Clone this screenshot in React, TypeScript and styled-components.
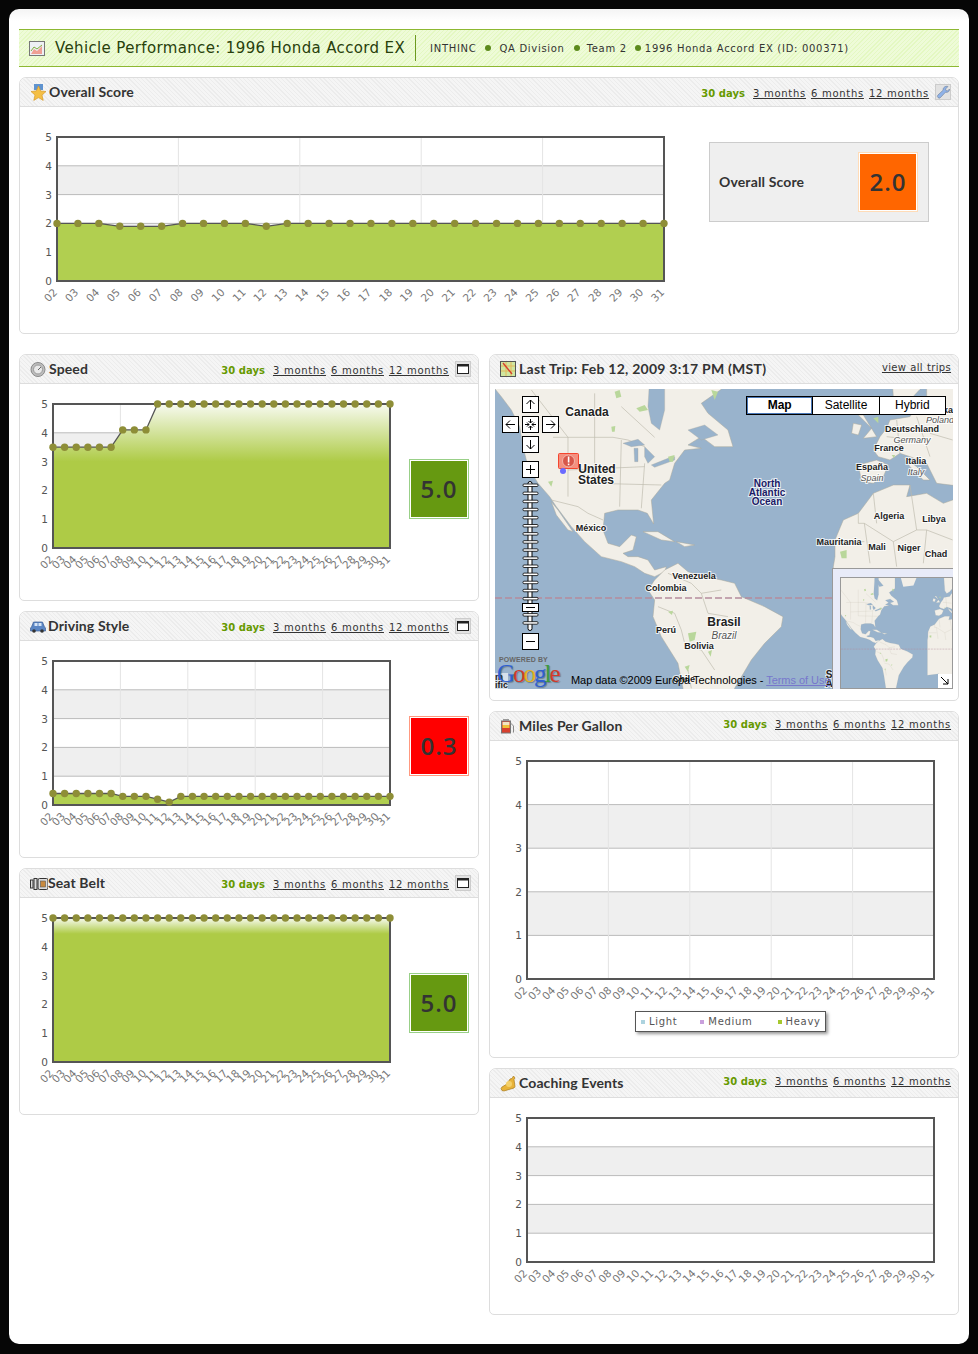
import React from 'react';
import styled, { createGlobalStyle } from 'styled-components';

const GlobalStyle = createGlobalStyle`
  html, body {
    margin: 0;
    padding: 0;
    background: #060606;
  }
  * {
    box-sizing: border-box;
  }
`;

const verdana = '"DejaVu Sans", Verdana, sans-serif';
const heading = 'Lato, "Open Sans", sans-serif';
const arial = '"Liberation Sans", Arial, sans-serif';

const Page = styled.div`
  width: 960px;
  height: 1335px;
  margin: 9px 0 0 9px;
  padding: 20px 10px 0;
  background: linear-gradient(#f4f4f4, #fff 12px);
  border-radius: 10px;
`;

const TitleBar = styled.div`
  display: flex;
  align-items: center;
  height: 38px;
  padding-left: 10px;
  border-top: 1px solid #8db832;
  border-bottom: 1px solid #8db832;
  background: repeating-linear-gradient(135deg, #e4f8c2 0 1px, #eefbd8 1px 3px);
`;

const TitleText = styled.h1`
  margin: 0 10px;
  font: 400 15px ${verdana};
  letter-spacing: 0.36px;
  color: #28400c;
  white-space: nowrap;
`;

const Crumbs = styled.div`
  display: flex;
  align-items: center;
  height: 26px;
  border-left: 1px solid #6c9a1f;
  padding-left: 14px;
  font: 400 10px ${verdana};
  letter-spacing: 0.7px;
  color: #333;
  white-space: nowrap;
`;

const Dot = styled.span<{ $l: number; $r: number }>`
  width: 6px;
  height: 6px;
  margin: 0 ${p => p.$r}px 0 ${p => p.$l}px;
  border-radius: 50%;
  background: #5c8a1c;
`;

const Panel = styled.section`
  border: 1px solid #ddd;
  border-radius: 7px 7px 5px 5px;
  background: #fff;
`;

const PanelHead = styled.header`
  display: flex;
  align-items: center;
  height: 29px;
  padding: 0 7px 0 10px;
  border-bottom: 1px solid #ddd;
  border-radius: 6px 6px 0 0;
  background: repeating-linear-gradient(45deg, #ececec 0 1px, #f5f5f5 1px 3px);
`;

const PanelTitle = styled.h2<{ $m?: number; $spread?: number }>`
  flex: 1;
  margin: 0 0 2px ${p => p.$m ?? 3}px;
  font: 700 14px ${heading};
  letter-spacing: ${p => p.$spread ?? 0.12}px;
  color: #333;
  white-space: nowrap;
`;

const Ranges = styled.nav<{ $lift?: boolean }>`
  display: flex;
  align-items: center;
  margin-bottom: ${p => (p.$lift ? 5 : 0)}px;
  font: 400 10px ${verdana};
  letter-spacing: 0.72px;
  color: #333;
  white-space: nowrap;
`;

const Current = styled.b`
  margin: 2px 8px 0 0;
  color: #669900;
  letter-spacing: 0.05px;
`;

const RangeLink = styled.a`
  margin-top: 2px;
  color: #333;
  text-decoration: underline;

  & + & {
    margin-left: 5px;
  }
`;

const TripLink = styled(RangeLink)`
  letter-spacing: 0.33px;
  word-spacing: 0.5px;
`;

const ToolButton = styled.span`
  display: flex;
  align-items: center;
  justify-content: center;
  width: 16px;
  height: 16px;
  margin-left: 6px;
  background: #e2e2e2;
  border: 1px solid #ccc;
`;

const Body = styled.div`
  display: flex;
  align-items: flex-start;
  padding: 12px 0 28px 3px;
`;

const CoachBody = styled(Body)`
  padding-left: 7px;
`;

const WideBody = styled(Body)`
  padding: 22px 0 28px 7px;
`;

const ChartColumn = styled.div`
  padding: 12px 0 25px 7px;
`;

const ChartSvg = styled.svg`
  display: block;
  flex: none;
`;

const ScoreBadge = styled.div<{ $bg: string; $edge: string }>`
  display: flex;
  align-items: center;
  justify-content: center;
  flex: none;
  width: 60px;
  height: 60px;
  padding-bottom: 2px;
  border: 1px solid ${p => p.$edge};
  box-shadow: inset 0 0 0 1px #fff;
  background: ${p => p.$bg};
  font: 600 24px "Open Sans", sans-serif;
  letter-spacing: 1px;
  color: #333;
`;

const SideScore = styled(ScoreBadge)`
  margin: 63px 0 0 9px;
`;

const OverallBox = styled.div`
  display: flex;
  align-items: center;
  justify-content: space-between;
  width: 220px;
  height: 80px;
  margin: 13px 0 0 35px;
  padding: 0 10px 0 9px;
  border: 1px solid #ccc;
  background: #efefef;
  font: 700 14px ${heading};
  letter-spacing: 0.14px;
  color: #333;
`;

const OverallLabel = styled.span`
  margin-bottom: 2px;
`;

const Columns = styled.div`
  display: grid;
  grid-template-columns: 460px 470px;
  gap: 10px;
  margin-top: 20px;
`;

const Stack = styled.div`
  display: flex;
  flex-direction: column;
  gap: 10px;
`;

const OverallPanel = styled(Panel)`
  margin-top: 10px;
`;

const Legend = styled.div`
  display: flex;
  width: 191px;
  height: 21px;
  margin: 8px 0 0 138px;
  padding-left: 5px;
  align-items: center;
  border: 1px solid #555;
  background: #fff;
  box-shadow: 2px 2px 3px #999;
  font: 400 10px ${verdana};
  letter-spacing: 0.7px;
  color: #555;
`;

const LegendItem = styled.span<{ $w: number }>`
  display: flex;
  align-items: center;
  width: ${p => p.$w}px;
`;

const Swatch = styled.i<{ $c: string }>`
  width: 4px;
  height: 4px;
  margin-right: 4px;
  background: ${p => p.$c};
`;

const MapBody = styled.div`
  padding: 5px 5px 11px;
`;

const MapFrame = styled.div`
  position: relative;
  width: 458px;
  height: 300px;
  overflow: hidden;
  background: #99b3cc;
`;

const LabelLayer = styled.svg`
  position: absolute;
  left: 0;
  top: 0;
`;

const NavButton = styled.span<{ $x: number; $y: number }>`
  position: absolute;
  left: ${p => p.$x}px;
  top: ${p => p.$y}px;
  display: flex;
  align-items: center;
  justify-content: center;
  width: 17px;
  height: 17px;
  border: 1px solid #000;
  background: #fff;
`;

const Slider = styled.svg`
  position: absolute;
  left: 27px;
  top: 92px;
`;

const MapTypes = styled.div`
  position: absolute;
  left: 251px;
  top: 7px;
  display: flex;
  width: 200px;
  height: 19px;
  border: 1px solid #000;
  background: #000;
  gap: 1px;
`;

const MapType = styled.span<{ $on?: boolean }>`
  flex: 1;
  text-align: center;
  background: #fff;
  font: ${p => (p.$on ? 700 : 400)} 12px/17px ${arial};
  color: #000;
  box-shadow: ${p => (p.$on ? 'inset 0 0 0 1px #4a78b8' : 'none')};
`;

const Overview = styled.div`
  position: absolute;
  right: 0;
  bottom: 0;
  width: 121px;
  height: 121px;
  padding: 8px 0 0 7px;
  border: 1px solid #999;
  border-width: 1px 0 0 1px;
  background: #e8ebf8;
`;

const OverviewMap = styled.div`
  position: relative;
  width: 113px;
  height: 112px;
  border: 1px solid #999;
  background: #99b3cc;
  overflow: hidden;
`;

const OverviewToggle = styled.span`
  position: absolute;
  right: 0;
  bottom: 0;
  display: flex;
  align-items: center;
  justify-content: center;
  width: 14px;
  height: 14px;
  background: #fff;
`;

const Powered = styled.div`
  position: absolute;
  left: 4px;
  top: 267px;
  font: 700 7px ${arial};
  letter-spacing: 0.1px;
  color: #666;
`;

const GoogleMark = styled.div`
  position: absolute;
  left: 2px;
  top: 271px;
  font: 400 25px/28px "Liberation Serif", serif;
  letter-spacing: -2px;
  text-shadow: 1px 1px 1px rgba(0, 0, 0, 0.3);
  white-space: nowrap;
`;

const Letter = styled.span<{ $c: string }>`
  color: ${p => p.$c};
`;

const Attribution = styled.div`
  position: absolute;
  left: 76px;
  top: 285px;
  font: 400 11px/13px ${arial};
  letter-spacing: -0.04px;
  color: #000;
  white-space: nowrap;
`;

const TermsLink = styled.a`
  color: #7777cc;
  text-decoration: underline;
`;

const CutLabel = styled.div`
  position: absolute;
  left: 0;
  top: 284px;
  font: 700 9px/8px ${arial};
  color: #222;
  background: rgba(255, 255, 255, 0.6);
`;

// coastlines, traced in the 3x crop coordinates of the west half
const WEST_LAND: string[] = [
  '0,0 22,118 40,140 70,180 95,230 105,290 120,350 150,400 185,440 205,470 250,530 290,575 340,620 400,635 440,650 470,670 500,680 530,665 535,650 500,660 480,630 450,620 420,620 405,610 435,600 445,560 430,555 395,590 360,580 345,540 350,490 390,480 450,480 478,490 497,522 490,450 530,400 545,390 560,340 590,300 640,295 600,285 640,260 680,290 735,290 720,240 660,190 640,160 700,118 700,0',
  '530,660 570,640 600,665 650,680 700,690 740,700 760,740 830,770 885,800 880,830 830,880 790,930 740,1015 700,1200 640,1300 610,1180 585,1015 570,940 520,860 495,800 500,750 480,720 500,690',
  '465,545 510,545 560,575 520,570',
  '565,575 620,585 590,590',
  '190,455 210,480 255,545 240,540 205,495',
];

const WEST_WATER: string[] = [
  '490,0 530,0 530,180 515,240 490,220 480,170',
  '405,280 450,268 470,285 430,290',
  '438,295 450,295 450,335 440,335',
  '470,290 500,320 480,340 470,320',
  '490,345 540,325 560,320 560,330 500,352',
  '600,240 650,225 690,255 640,270',
  '500,40 530,30 580,90 540,100',
];

const WEST_GREEN: string[] = [
  '445,175 470,165 480,180 455,185',
  '380,125 395,120 400,140 385,145',
  '370,230 382,228 380,245 372,245',
  '540,320 560,315 555,335 545,335',
  '180,395 195,392 190,410',
  '660,905 672,900 668,920',
  '600,850 625,845 620,870 605,875',
  '540,785 555,782 552,795',
  '670,120 690,125 680,150',
  '590,950 605,945 600,965',
];

const WEST_LINES: string[] = [
  '195,262 375,262 420,270 470,290',
  '190,450 270,470 300,490 345,510',
  '320,262 320,400',
  '240,262 240,440',
  '400,270 395,470',
  '470,340 460,475',
  '240,360 470,350',
  '320,400 520,405',
  '540,670 610,700 640,730 700,720',
  '510,770 560,790 580,840 590,880',
  '590,890 640,900 680,960',
  '600,960 610,1015',
  '640,730 660,790 720,800',
  '130,120 240,262',
  '320,130 320,262',
  '400,170 500,262',
];

// same idea for the east half crop
const EAST_LAND: string[] = [
  '310,1015 310,650 315,620 315,570 340,510 385,490 430,430 490,405 540,405 530,440 590,430 640,460 668,450 700,450 700,1500 520,1200 430,1000',
  '385,345 440,330 475,345 460,380 430,400 395,395',
  '430,300 450,260 470,235 480,210 540,200 560,170 600,190 668,130 700,130 700,410 620,400 590,340 540,320 510,310 480,330 445,320',
  '520,320 560,350 600,390 580,390 540,350',
  '385,195 400,195 440,260 400,265 425,235',
  '370,220 395,225 385,255 365,250',
  '480,0 570,0 570,118 540,150 510,170 490,140',
  '590,0 700,0 700,190 620,180 590,150',
];

const EAST_GREEN: string[] = [
  '430,205 445,200 445,220',
  '330,605 350,600 350,625 335,625',
  '485,315 495,315 492,325',
];

const EAST_LINES: string[] = [
  '385,490 385,520 403,520 490,575 560,540 590,540 668,570',
  '403,520 420,640',
  '490,575 500,650',
  '590,540 580,640',
  '315,575 403,575',
  '430,430 440,520',
  '540,405 560,540',
  '500,210 510,310',
  '560,200 600,320',
  '470,260 560,270',
  '600,250 668,270',
];

const PLACES: { x: number; y: number; t: string; s: number; i?: boolean; navy?: boolean }[] = [
  { x: 92, y: 27, t: 'Canada', s: 12 },
  { x: 102, y: 84, t: 'United', s: 12 },
  { x: 101, y: 95, t: 'States', s: 12 },
  { x: 272, y: 98, t: 'North', s: 10, navy: true },
  { x: 272, y: 107, t: 'Atlantic', s: 10, navy: true },
  { x: 272, y: 116, t: 'Ocean', s: 10, navy: true },
  { x: 96, y: 142, t: 'México', s: 9 },
  { x: 199, y: 190, t: 'Venezuela', s: 9 },
  { x: 171, y: 202, t: 'Colombia', s: 9 },
  { x: 229, y: 237, t: 'Brasil', s: 12 },
  { x: 229, y: 250, t: 'Brazil', s: 10, i: true },
  { x: 171, y: 244, t: 'Perú', s: 9 },
  { x: 204, y: 260, t: 'Bolivia', s: 9 },
  { x: 189, y: 293, t: 'Chile', s: 9 },
  { x: 417, y: 43, t: 'Deutschland', s: 9 },
  { x: 417, y: 54, t: 'Germany', s: 9, i: true },
  { x: 445, y: 34, t: 'Poland', s: 9, i: true },
  { x: 453, y: 24, t: 'ka', s: 9 },
  { x: 394, y: 62, t: 'France', s: 9 },
  { x: 377, y: 81, t: 'España', s: 9 },
  { x: 377, y: 92, t: 'Spain', s: 9, i: true },
  { x: 421, y: 75, t: 'Italia', s: 9 },
  { x: 421, y: 86, t: 'Italy', s: 9, i: true },
  { x: 394, y: 130, t: 'Algeria', s: 9 },
  { x: 439, y: 133, t: 'Libya', s: 9 },
  { x: 344, y: 156, t: 'Mauritania', s: 9 },
  { x: 382, y: 161, t: 'Mali', s: 9 },
  { x: 414, y: 162, t: 'Niger', s: 9 },
  { x: 441, y: 168, t: 'Chad', s: 9 },
  { x: 334, y: 289, t: 'S', s: 10 },
  { x: 334, y: 298, t: 'A', s: 10 },
];

// base map, shared by the main map and the overview
const MapArt: React.FC<{ width: number; height: number; view: string }> = ({ width, height, view }) => (
  <ChartSvg width={width} height={height} viewBox={view} preserveAspectRatio="none">
    <rect x="-400" y="-400" width="1400" height="1400" fill="#99b3cc" />
    <polygon points="240,-60 310,-60 290,-10 255,-6" fill="#f2efe8" />
    <polygon points="40,-60 200,-60 200,0 40,0" fill="#f2efe8" />
    <g transform="translate(-7 -39) scale(0.3333)">
      {WEST_LAND.map(p => (
        <polygon key={p} points={p} fill="#f2efe8" stroke="#a9a79a" strokeWidth="1.5" />
      ))}
      {WEST_LINES.map(p => (
        <polyline key={p} points={p} fill="none" stroke="#bdb9ac" strokeWidth="2" />
      ))}
      {WEST_WATER.map(p => (
        <polygon key={p} points={p} fill="#99b3cc" stroke="#a9a79a" strokeWidth="1" />
      ))}
      {WEST_GREEN.map(p => (
        <polygon key={p} points={p} fill="#b9d79b" />
      ))}
    </g>
    <g transform="translate(235 -39) scale(0.3333)">
      {EAST_LAND.map(p => (
        <polygon key={p} points={p} fill="#f2efe8" stroke="#a9a79a" strokeWidth="1.5" />
      ))}
      {EAST_LINES.map(p => (
        <polyline key={p} points={p} fill="none" stroke="#bdb9ac" strokeWidth="2" />
      ))}
      {EAST_GREEN.map(p => (
        <polygon key={p} points={p} fill="#b9d79b" />
      ))}
    </g>
    <line x1="-400" x2="1000" y1="209" y2="209" stroke="#b58c9c" strokeWidth="1.5" strokeDasharray="7 3" />
  </ChartSvg>
);

const Arrow: React.FC<{ d: string }> = ({ d }) => (
  <svg width="13" height="13" viewBox="0 0 13 13">
    <path d={d} fill="none" stroke="#000" strokeWidth="1" />
  </svg>
);

const MapPanelBody = () => (
  <MapBody>
    <MapFrame>
      <MapArt width={458} height={300} view="0 0 458 300" />
      <LabelLayer width={458} height={300}>
        {PLACES.map(p => (
          <text
            key={p.t}
            x={p.x}
            y={p.y}
            textAnchor="middle"
            fontFamily={arial}
            fontSize={p.s}
            fontWeight={p.i ? 400 : 700}
            fontStyle={p.i ? 'italic' : 'normal'}
            fill={p.navy ? '#1b1b66' : p.i ? '#555' : '#222'}
            stroke="#fff"
            strokeWidth="2"
            strokeOpacity="0.75"
            paintOrder="stroke"
          >
            {p.t}
          </text>
        ))}
        <rect x="63.5" y="64.5" width="20" height="15" rx="1" fill="#f4907f" stroke="#f5452e" />
        <circle cx="73.5" cy="72" r="6" fill="#d8574a" stroke="#f4b5aa" />
        <rect x="72.8" y="67.5" width="1.6" height="6" fill="#fff" />
        <rect x="72.8" y="74.6" width="1.6" height="1.6" fill="#fff" />
        <circle cx="68" cy="82" r="3" fill="#6a6aff" />
      </LabelLayer>

      <NavButton $x={27} $y={7}><Arrow d="M6.5 11V2M2.5 6l4-4 4 4" /></NavButton>
      <NavButton $x={7} $y={27}><Arrow d="M11 6.5H2M6 2.5l-4 4 4 4" /></NavButton>
      <NavButton $x={27} $y={27}>
        <Arrow d="M6.5 1v4M4.5 3l2 2 2-2M6.5 12V8M4.5 10l2-2 2 2M1 6.5h4M3 4.5l2 2-2 2M12 6.5H8M10 4.5l-2 2 2 2" />
      </NavButton>
      <NavButton $x={47} $y={27}><Arrow d="M2 6.5h9M7 2.5l4 4-4 4" /></NavButton>
      <NavButton $x={27} $y={47}><Arrow d="M6.5 2v9M2.5 7l4 4 4-4" /></NavButton>
      <NavButton $x={27} $y={72}><Arrow d="M6.5 2v9M2 6.5h9" /></NavButton>
      <Slider width="17" height="150" viewBox="0 0 17 150">
        <rect x="6" y="0.5" width="4" height="149" rx="2" fill="#fff" stroke="#000" />
        {Array.from({ length: 18 }, (_, i) => (
          <rect key={i} x="1" y={3 + i * 8.1} width="15" height="2.5" rx="1" fill="#fff" stroke="#000" strokeWidth="0.8" />
        ))}
        <rect x="0.5" y="122.5" width="16" height="8" fill="#fff" stroke="#000" />
        <line x1="4" x2="13" y1="126.5" y2="126.5" stroke="#000" />
      </Slider>
      <NavButton $x={27} $y={244}><Arrow d="M2 6.5h9" /></NavButton>

      <MapTypes>
        <MapType $on>Map</MapType>
        <MapType>Satellite</MapType>
        <MapType>Hybrid</MapType>
      </MapTypes>

      <CutLabel>
        <div>m</div>
        <div>ific</div>
      </CutLabel>
      <Powered>POWERED BY</Powered>
      <GoogleMark>
        <Letter $c="#2f5fd0">G</Letter>
        <Letter $c="#d23a2a">o</Letter>
        <Letter $c="#e3b21c">o</Letter>
        <Letter $c="#2f5fd0">g</Letter>
        <Letter $c="#3a9a3a">l</Letter>
        <Letter $c="#d23a2a">e</Letter>
      </GoogleMark>
      <Attribution>
        Map data ©2009 Europa Technologies - <TermsLink>Terms of Use</TermsLink>
      </Attribution>

      <Overview>
        <OverviewMap>
          <MapArt width={113} height={112} view="40 -36 390 386" />
          <OverviewToggle>
            <svg width="10" height="10" viewBox="0 0 10 10">
              <path d="M1 1l7 7M8 3v5H3" fill="none" stroke="#000" />
            </svg>
          </OverviewToggle>
        </OverviewMap>
      </Overview>
    </MapFrame>
  </MapBody>
);

const DAYS = Array.from({ length: 30 }, (_, i) => String(i + 2).padStart(2, '0'));

interface ChartProps {
  id: string;
  plotW: number;
  plotH: number;
  values?: number[];
  fadeTo?: number;
  columns?: boolean;
}

const Chart: React.FC<ChartProps> = ({ id, plotW, plotH, values, fadeTo, columns = true }) => {
  const ox = 30;
  const oy = 8;
  const yOf = (v: number) => oy + plotH - (v / 5) * plotH;
  const xOf = (i: number) => ox + (i * plotW) / 29;
  const pts = values ? values.map((v, i) => `${xOf(i)},${yOf(v)}`).join(' ') : '';
  const gradId = `fade-${id}`;

  return (
    <ChartSvg width={plotW + 40} height={plotH + 32}>
      {fadeTo !== undefined && (
        <defs>
          <linearGradient id={gradId} gradientUnits="userSpaceOnUse" x1="0" x2="0" y1={yOf(5)} y2={yOf(fadeTo)}>
            <stop offset="0" stopColor="#f7faf0" />
            <stop offset="1" stopColor="#aecb46" />
          </linearGradient>
        </defs>
      )}
      <rect x={ox} y={yOf(4)} width={plotW} height={plotH / 5} fill="#efefef" />
      <rect x={ox} y={yOf(2)} width={plotW} height={plotH / 5} fill="#efefef" />
      {[1, 2, 3, 4].map(n => (
        <line key={n} x1={ox} x2={ox + plotW} y1={yOf(n)} y2={yOf(n)} stroke="#bbb" />
      ))}
      {columns &&
        [1, 2, 3, 4].map(n => (
          <line
            key={n}
            x1={ox + (n * plotW) / 5}
            x2={ox + (n * plotW) / 5}
            y1={oy}
            y2={oy + plotH}
            stroke="#e4e4e4"
          />
        ))}
      {values && (
        <polygon
          points={`${ox},${oy + plotH} ${pts} ${ox + plotW},${oy + plotH}`}
          fill={fadeTo !== undefined ? `url(#${gradId})` : '#b1cf50'}
        />
      )}
      <rect x={ox} y={oy} width={plotW} height={plotH} fill="none" stroke="#555" strokeWidth="2" />
      {values && <polyline points={pts} fill="none" stroke="#555" strokeWidth="1.3" />}
      {values &&
        values.map((v, i) => <circle key={i} cx={xOf(i)} cy={yOf(v)} r="3.7" fill="#8e8e37" />)}
      {[0, 1, 2, 3, 4, 5].map(n => (
        <text key={n} x={ox - 5} y={yOf(n) + 4} textAnchor="end" fontFamily={verdana} fontSize="10.5" fill="#555">
          {n}
        </text>
      ))}
      {DAYS.map((d, i) => (
        <text
          key={d}
          transform={`translate(${xOf(i) + 1} ${oy + plotH + 12}) rotate(-45)`}
          textAnchor="end"
          fontFamily={verdana}
          fontSize="10.5"
          fill="#777"
        >
          {d}
        </text>
      ))}
    </ChartSvg>
  );
};

const IconBox = styled.svg`
  display: block;
  flex: none;
`;

const Glyphs: Record<string, React.ReactNode> = {
  star: (
    <>
      <rect x="4" y="0" width="9" height="6" fill="#5f93cf" />
      <path d="M8.5 2l2.2 5 5.3.5-4 3.6 1.2 5.3-4.7-2.8-4.7 2.8 1.2-5.3-4-3.6 5.3-.5z" fill="#f4bf45" stroke="#d79a2a" strokeWidth="0.7" />
    </>
  ),
  gauge: (
    <>
      <circle cx="8" cy="8.5" r="7" fill="#bdbdbd" stroke="#8a8a8a" />
      <circle cx="8" cy="8.5" r="4.5" fill="#e9e9e9" stroke="#9a9a9a" />
      <path d="M8 9l3-3" stroke="#666" strokeWidth="1" />
    </>
  ),
  car: (
    <>
      <path d="M0.5 10l1-1 2-5h9l2 5 1 1v3H.5z" fill="#5b86c4" stroke="#3c5f96" strokeWidth="0.7" />
      <rect x="4.5" y="5" width="3" height="3" fill="#d5e4f6" />
      <rect x="8.5" y="5" width="3" height="3" fill="#d5e4f6" />
      <circle cx="4" cy="13" r="1.8" fill="#333" />
      <circle cx="12" cy="13" r="1.8" fill="#333" />
    </>
  ),
  belt: (
    <>
      <rect x="0.5" y="5" width="2.5" height="8" fill="#ddd" stroke="#333" />
      <rect x="4" y="3.5" width="3" height="11" fill="#ddd" stroke="#333" />
      <rect x="8" y="3.5" width="10" height="11" rx="1.5" fill="#ddd" stroke="#333" />
      <rect x="10.5" y="6" width="5" height="6" fill="#c98a3f" stroke="#555" strokeWidth="0.6" />
    </>
  ),
  trip: (
    <>
      <rect x="0.5" y="0.5" width="15" height="15" fill="#cfe6a0" stroke="#555" />
      <path d="M1 5h14M1 10h14M6 1v14M11 1v14" stroke="#e4b85a" strokeWidth="1" />
      <path d="M3 2l9 11" stroke="#d8402e" strokeWidth="1.4" />
    </>
  ),
  pump: (
    <>
      <rect x="1.5" y="3" width="9" height="12" fill="#d8402e" stroke="#777" />
      <rect x="2.5" y="4" width="7" height="3" fill="#f3e6c2" />
      <rect x="2.5" y="7" width="7" height="3" fill="#f0c23a" />
      <path d="M10.5 5l3 3v6.5" fill="none" stroke="#888" />
      <rect x="3" y="1" width="6" height="2" fill="#999" />
    </>
  ),
  bell: (
    <>
      <path d="M13.5 1l1.5 2-1 1.5 1 7-1 1.5-10 3-2-.5-1-2 1-1.5 5-3 3-5 2-.5z" fill="#e8b339" stroke="#a87a1c" strokeWidth="0.7" />
      <circle cx="9" cy="9" r="3" fill="#f4d06a" />
    </>
  ),
};

const PanelIcon: React.FC<{ name: string; w?: number }> = ({ name, w = 16 }) => (
  <IconBox width={w} height="17" viewBox={`0 0 ${w} 17`}>
    {Glyphs[name]}
  </IconBox>
);

const WindowIcon = () => (
  <svg width="12" height="10" viewBox="0 0 12 10">
    <rect x="0.5" y="0.5" width="11" height="9" fill="#fff" stroke="#222" />
    <rect x="0" y="0" width="12" height="2.5" fill="#222" />
  </svg>
);

const WrenchIcon = () => (
  <svg width="14" height="14" viewBox="0 0 14 14">
    <path d="M12 1.5L9.5 4l.5 1.5 1.5.5 2-2c.4 2-1.5 4-4 3.2L4.5 12.5a1.5 1.5 0 0 1-2.6-2.4l5.3-5C6.6 2.6 9.5.6 12 1.5z" fill="#8fb2e8" stroke="#6f7f99" strokeWidth="0.6" />
  </svg>
);

const RangeBar: React.FC<{ tool?: React.ReactNode }> = ({ tool }) => (
  <Ranges $lift={!tool}>
    <Current>30 days</Current>
    <RangeLink>3 months</RangeLink>
    <RangeLink>6 months</RangeLink>
    <RangeLink>12 months</RangeLink>
    {tool && <ToolButton>{tool}</ToolButton>}
  </Ranges>
);

const flat = (pairs: [number, number][]) =>
  pairs.flatMap(([v, n]) => Array.from({ length: n }, () => v));

const overallData = flat([[2, 3], [1.9, 3], [2, 4], [1.9, 1], [2, 19]]);
const speedData = flat([[3.5, 6], [4.1, 3], [5, 21]]);
const drivingData = flat([[0.4, 6], [0.3, 3], [0.2, 1], [0.1, 1], [0.3, 19]]);
const beltData = flat([[5, 30]]);

const App: React.FC = () => (
  <>
    <GlobalStyle />
    <Page>
      <TitleBar>
        <svg width="16" height="15" viewBox="0 0 16 15">
          <rect x="0.5" y="0.5" width="15" height="14" fill="#eef0f4" stroke="#777" />
          <path d="M2 13l3-5 3 2 5-5v8z" fill="#ef9f94" />
          <path d="M2 10l3-4 3 2 5-4" fill="none" stroke="#7fae3c" />
        </svg>
        <TitleText>Vehicle Performance: 1996 Honda Accord EX</TitleText>
        <Crumbs>
          INTHINC<Dot $l={9} $r={8} />QA Division<Dot $l={9} $r={7} />Team 2<Dot $l={8} $r={4} />1996 Honda Accord EX (ID: 000371)
        </Crumbs>
      </TitleBar>

      <OverallPanel>
        <PanelHead>
          <PanelIcon name="star" />
          <PanelTitle>Overall Score</PanelTitle>
          <RangeBar tool={<WrenchIcon />} />
        </PanelHead>
        <WideBody>
          <Chart id="overall" plotW={607} plotH={144} values={overallData} />
          <OverallBox>
            <OverallLabel>Overall Score</OverallLabel>
            <ScoreBadge $bg="#ff6600" $edge="#ffdcb8">2.0</ScoreBadge>
          </OverallBox>
        </WideBody>
      </OverallPanel>

      <Columns>
        <Stack>
          <Panel>
            <PanelHead>
              <PanelIcon name="gauge" />
              <PanelTitle>Speed</PanelTitle>
              <RangeBar tool={<WindowIcon />} />
            </PanelHead>
            <Body>
              <Chart id="speed" plotW={337} plotH={144} values={speedData} fadeTo={3} />
              <SideScore $bg="#669911" $edge="#99d088">5.0</SideScore>
            </Body>
          </Panel>
          <Panel>
            <PanelHead>
              <PanelIcon name="car" />
              <PanelTitle $m={2}>Driving Style</PanelTitle>
              <RangeBar tool={<WindowIcon />} />
            </PanelHead>
            <Body>
              <Chart id="driving" plotW={337} plotH={144} values={drivingData} />
              <SideScore $bg="#ff0000" $edge="#ff9980">0.3</SideScore>
            </Body>
          </Panel>
          <Panel>
            <PanelHead>
              <PanelIcon name="belt" w={18} />
              <PanelTitle $m={0}>Seat Belt</PanelTitle>
              <RangeBar tool={<WindowIcon />} />
            </PanelHead>
            <Body>
              <Chart id="belt" plotW={337} plotH={144} values={beltData} fadeTo={4.45} />
              <SideScore $bg="#669911" $edge="#99d088">5.0</SideScore>
            </Body>
          </Panel>
        </Stack>

        <Stack>
          <Panel>
            <PanelHead>
              <PanelIcon name="trip" />
              <PanelTitle $spread={0.25}>Last Trip: Feb 12, 2009 3:17 PM (MST)</PanelTitle>
              <Ranges $lift>
                <TripLink>view all trips</TripLink>
              </Ranges>
            </PanelHead>
            <MapPanelBody />
          </Panel>
          <Panel>
            <PanelHead>
              <PanelIcon name="pump" />
              <PanelTitle>Miles Per Gallon</PanelTitle>
              <RangeBar />
            </PanelHead>
            <ChartColumn>
              <Chart id="mpg" plotW={407} plotH={218} />
              <Legend>
                <LegendItem $w={60}><Swatch $c="#add3df" />Light</LegendItem>
                <LegendItem $w={78}><Swatch $c="#c9a0dc" />Medium</LegendItem>
                <LegendItem $w={48}><Swatch $c="#a6c82e" />Heavy</LegendItem>
              </Legend>
            </ChartColumn>
          </Panel>
          <Panel>
            <PanelHead>
              <PanelIcon name="bell" />
              <PanelTitle>Coaching Events</PanelTitle>
              <RangeBar />
            </PanelHead>
            <CoachBody>
              <Chart id="coach" plotW={407} plotH={144} columns={false} />
            </CoachBody>
          </Panel>
        </Stack>
      </Columns>
    </Page>
  </>
);

export default App;
